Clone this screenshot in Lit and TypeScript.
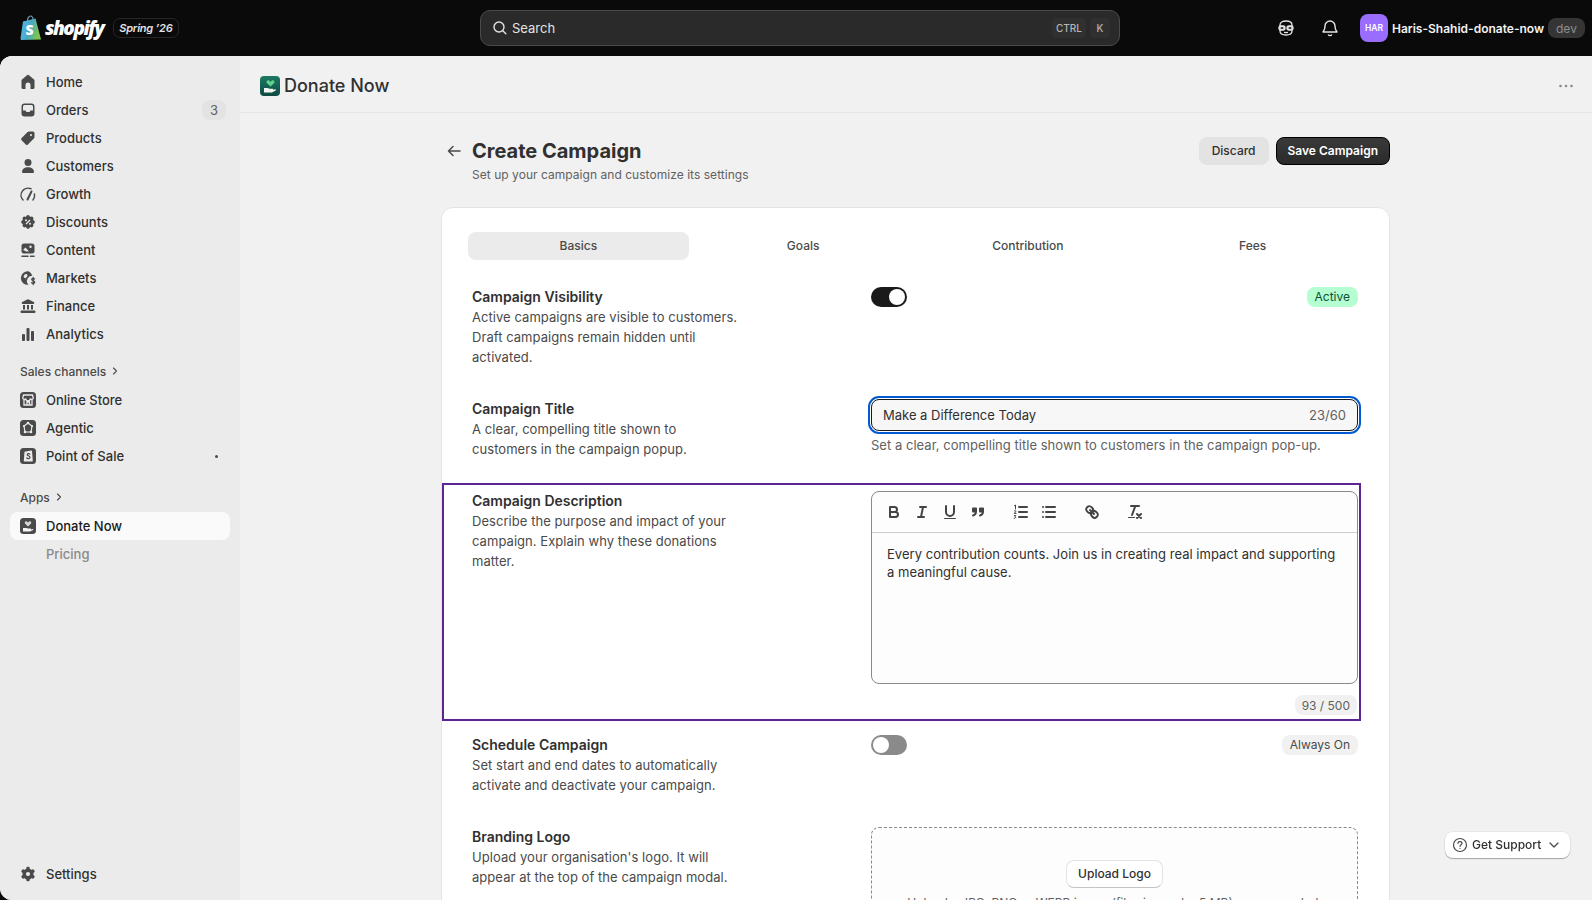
import { LitElement, html, svg, css } from 'lit'
import { customElement } from 'lit/decorators.js'

const icon = (body: unknown, size = 20, box = 20) => html`
    <svg width="${size}" height="${size}" viewBox="0 0 ${box} ${box}">${body}</svg>`

const navIcons: Record<string, unknown> = {
    home: svg`<path fill="#4a4a4a" d="M9 3.2a1.5 1.5 0 0 1 2 0l5 4.3a1.5 1.5 0 0 1 .5 1.1v6.900a1.500 1.500 0 0 1-1.500 1.500h-2.500v-4a2.500 2.500 0 0 0-5 0v4H5a1.500 1.500 0 0 1-1.500-1.500V8.600A1.500 1.500 0 0 1 4 7.500z"/>`,
    orders: svg`<path fill="#4a4a4a" fill-rule="evenodd" d="M6.500 3.500h7a3 3 0 0 1 3 3v7a3 3 0 0 1-3 3h-7a3 3 0 0 1-3-3v-7a3 3 0 0 1 3-3zM5 6.500V10.500h2.500l1 1.500h3l1-1.500H15V6.500A1.500 1.500 0 0 0 13.500 5h-7A1.500 1.500 0 0 0 5 6.500z"/>`,
    products: svg`<path fill="#4a4a4a" fill-rule="evenodd" d="M11 3.500h4A1.500 1.500 0 0 1 16.500 5v4a2 2 0 0 1-.6 1.400l-6 6a1.500 1.500 0 0 1-2.100 0l-4.200-4.200a1.500 1.500 0 0 1 0-2.100l6-6A2 2 0 0 1 11 3.500zM13 6a1 1 0 1 0 .01 0z"/>`,
    customers: svg`<circle cx="10" cy="6.500" r="3.500" fill="#4a4a4a"/><path fill="#4a4a4a" d="M4 16c0-3 2.500-4.800 6-4.800s6 1.800 6 4.800a1 1 0 0 1-1 1H5a1 1 0 0 1-1-1z"/>`,
    growth: svg`<g fill="none" stroke="#4a4a4a" stroke-width="1.500" stroke-linecap="round"><path d="M5 16a7 7 0 0 1 8-11.200"/><path d="M16.500 10a7 7 0 0 1-1.500 6"/><path stroke-width="2" d="M9.500 15.500 13.500 7.500"/></g>`,
    discounts: svg`<g fill="#4a4a4a"><circle cx="10" cy="10" r="5.800"/><circle cx="10" cy="4.900" r="1.800"/><circle cx="10" cy="15.100" r="1.800"/><circle cx="4.900" cy="10" r="1.800"/><circle cx="15.100" cy="10" r="1.800"/><circle cx="6.400" cy="6.400" r="1.800"/><circle cx="13.600" cy="6.400" r="1.800"/><circle cx="6.400" cy="13.600" r="1.800"/><circle cx="13.600" cy="13.600" r="1.800"/></g><g fill="#ebebeb"><circle cx="8" cy="8.200" r="1"/><circle cx="12" cy="11.800" r="1"/></g><path stroke="#ebebeb" stroke-width="1.200" d="M12 8 8 12"/>`,
    content: svg`<rect x="3.500" y="3.500" width="13" height="10" rx="2.500" fill="#4a4a4a"/><circle cx="12.500" cy="6.800" r="1.200" fill="#ebebeb"/><path fill="#ebebeb" d="m5 10 2.500-2.500L11 11.500H8.500z"/><path stroke="#4a4a4a" stroke-width="1.500" stroke-linecap="round" d="M4 16.300h6M12.500 16.300H16"/>`,
    markets: svg`<path fill="#4a4a4a" d="M10.500 3.300a6.800 6.800 0 1 0 0 13.500 5.200 5.200 0 0 1-.9-6.200 5.200 5.200 0 0 1 4.700-2.900 7 7 0 0 0-3.800-4.400z"/><path fill="#ebebeb" d="M6.500 6.500 9 6l.5 2-2 2.500L5.500 9z"/><path fill="none" stroke="#4a4a4a" stroke-width="1.300" stroke-linecap="round" d="M16.500 11c-.5-.8-2.800-.9-2.800.6s3 1 3 2.600-2.500 1.500-3.200.5M15.200 9.500v7"/>`,
    finance: svg`<path fill="#4a4a4a" d="M9.300 3.400a1.500 1.500 0 0 1 1.400 0l5.100 2.700c.9.500.6 1.900-.5 1.900H4.700c-1.100 0-1.400-1.400-.5-1.900zM3.500 14.500h13a1 1 0 0 1 1 1v.5a1 1 0 0 1-1 1h-13a1 1 0 0 1-1-1v-.5a1 1 0 0 1 1-1zM5 9h2v4.500H5zM9 9h2v4.500H9zM13 9h2v4.500h-2z"/>`,
    analytics: svg`<g fill="#4a4a4a"><rect x="4" y="10" width="3" height="7" rx="1"/><rect x="8.500" y="4" width="3" height="13" rx="1"/><rect x="13" y="7" width="3" height="10" rx="1"/></g>`,
    store: svg`<rect x="2" y="2" width="16" height="16" rx="3.500" fill="#4a4a4a"/><path fill="none" stroke="#ebebeb" stroke-width="1.300" d="M5.500 5h9l.8 3a1.600 1.600 0 0 1-3 .5 1.800 1.800 0 0 1-4.600 0 1.600 1.600 0 0 1-3-.5zM6 9.500V15h8V9.500M9 15v-3h2.500v3"/>`,
    agentic: svg`<rect x="2" y="2" width="16" height="16" rx="3.500" fill="#4a4a4a"/><path fill="none" stroke="#ebebeb" stroke-width="1.200" d="M10 5 14 8 13 14H7L6 8z"/><circle cx="10" cy="5" r="1.300" fill="#ebebeb"/><circle cx="6" cy="8" r="1.100" fill="#ebebeb"/><circle cx="14" cy="8" r="1.100" fill="#ebebeb"/><circle cx="7" cy="14" r="1.300" fill="#ebebeb"/><circle cx="13" cy="14" r="1.300" fill="#ebebeb"/>`,
    pos: svg`<rect x="2" y="2" width="16" height="16" rx="3.500" fill="#4a4a4a"/><path fill="#ebebeb" d="M6.500 5.800 13.200 4.500c.4 0 .7.200.8.600l.8 9.700c0 .4-.3.700-.7.700H6.500c-.4 0-.8-.3-.7-.7z"/><path fill="none" stroke="#4a4a4a" stroke-width="1.200" stroke-linecap="round" d="M11.800 8.200c-.6-.8-2.600-.7-2.600.5s2.800 1 2.800 2.600-2.400 1.600-3.200.7"/>`,
    donate: svg`<rect x="2" y="2" width="16" height="16" rx="3.500" fill="#4a4a4a"/><path fill="#d8d8d8" d="M10 10.500 7 7.600c-1-1.400.9-3 2.100-1.900l.9.800.9-.8c1.200-1.100 3.100.5 2.100 1.900z"/><path fill="#f5f5f5" d="M5 12h3.500l1.500.6h2.500c.8 0 .8 1 0 1.100l2-.7c.7-.2 1.100.6.5 1l-3 1.600H5z"/>`,
    settings: svg`<g fill="#4a4a4a"><circle cx="10" cy="10" r="5.500"/><rect x="8.300" y="2.800" width="3.400" height="14.400" rx="1.200"/><rect x="8.300" y="2.800" width="3.400" height="14.400" rx="1.200" transform="rotate(60 10 10)"/><rect x="8.300" y="2.800" width="3.400" height="14.400" rx="1.200" transform="rotate(120 10 10)"/></g><circle cx="10" cy="10" r="2.100" fill="#ebebeb"/>`,
}

const mainNav = [
    { name: 'Home', ic: 'home' },
    { name: 'Orders', ic: 'orders', badge: '3' },
    { name: 'Products', ic: 'products' },
    { name: 'Customers', ic: 'customers' },
    { name: 'Growth', ic: 'growth' },
    { name: 'Discounts', ic: 'discounts' },
    { name: 'Content', ic: 'content' },
    { name: 'Markets', ic: 'markets' },
    { name: 'Finance', ic: 'finance' },
    { name: 'Analytics', ic: 'analytics' },
]

const chevron = html`<svg class="chev" width="10" height="10" viewBox="0 0 10 10"><path d="M3.500 2 6.500 5l-3 3" fill="none" stroke="#4a4a4a" stroke-width="1.100" stroke-linecap="round" stroke-linejoin="round"/></svg>`

const toolGroups = [
    [
        svg`<path d="M5 4h4.500a2.500 2.500 0 0 1 0 5H5zM5 9h5.500a2.500 2.500 0 0 1 0 5H5z"/>`,
        svg`<path d="M7 4h6M5 14h6M8 14l2-10"/>`,
        svg`<path d="M5 3v6a4 4 0 0 0 4 4 4 4 0 0 0 4-4V3"/><rect x="3" y="15" width="12" height="1" rx=".5" fill="#444" stroke="none"/>`,
        svg`<rect x="4" y="5.500" width="3" height="3" fill="#444"/><rect x="11" y="5.500" width="3" height="3" fill="#444"/><path d="M7 8.500c0 2.100-1.100 3.500-3 4M14 8.500c0 2.100-1.100 3.500-3 4"/>`,
    ],
    [
        svg`<path d="M7 4h8M7 9h8M7 14h8"/><path stroke-width="1" d="M2.500 2.600 3.500 2v4M2.300 8c.8-.8 1.800-.3 1.500.5L2.300 10.500h1.800M2.400 12.500h1.400l-.8 1.200c1 0 1 2-1 1.500"/>`,
        svg`<path d="M6 4h9M6 9h9M6 14h9M3 4h.01M3 9h.01M3 14h.01"/>`,
    ],
    [
        svg`<path d="M7 7l4 4"/><path d="M8.900 4.577a3.476 3.476 0 0 1 .36 4.679A3.476 3.476 0 0 1 4.577 8.900C3.185 7.500 2.035 6.400 4.217 4.217S7.500 3.185 8.900 4.577z"/><path d="M13.423 9.100a3.476 3.476 0 0 0-4.679-.36 3.476 3.476 0 0 0 .36 4.679c1.392 1.392 2.500 2.542 4.679.36S14.815 10.500 13.423 9.100z"/>`,
    ],
    [
        svg`<path d="M5 3h8M6 12l3.350-9M11 11l4 4M15 11l-4 4"/><rect x="2" y="14" width="7" height="1" rx=".5" fill="#444" stroke="none"/>`,
    ],
]

@customElement('app-root')
export class AppRoot extends LitElement {
    static styles = css`
      :host {
        display: block;
        height: 900px;
        overflow: hidden;
        background: #0a0a0a;
        font-family: Inter, "Noto Sans", sans-serif;
        font-size: 13px;
        color: #303030;
      }
      .topbar {
        height: 56px;
        display: flex;
        align-items: center;
      }
      .brand {
        width: 480px;
        flex: none;
        display: flex;
        align-items: center;
        padding-left: 20px;
        box-sizing: border-box;
      }
      .wordmark {
        font-family: "Open Sans", sans-serif;
        font-style: italic;
        font-weight: 800;
        font-size: 19px;
        letter-spacing: -1.5px;
        color: #fff;
        margin-left: 3px;
      }
      .season {
        margin-left: 10px;
        height: 18px;
        padding: 0 5px;
        border: 1px solid #262626;
        border-radius: 7px;
        display: flex;
        align-items: center;
        font-size: 11px;
        font-style: italic;
        font-weight: 600;
        color: #e3e3e3;
        letter-spacing: -0.2px;
      }
      .search {
        width: 640px;
        height: 36px;
        flex: none;
        box-sizing: border-box;
        background: #2a2a2a;
        border: 1px solid #4a4a4a;
        border-radius: 10px;
        display: flex;
        align-items: center;
        padding: 0 9px 0 11px;
        gap: 4px;
        color: #e3e3e3;
        font-size: 13px;
      }
      .search span.label { flex: 1; }
      .kbd {
        height: 20px;
        padding: 0 4px;
        display: flex;
        align-items: center;
        justify-content: center;
        background: #303030;
        border-radius: 5px;
        font-size: 10px;
        font-weight: 500;
        color: #b5b5b5;
      }
      .kbd + .kbd { padding: 0; width: 20px; }
      .top-right {
        flex: 1;
        display: flex;
        align-items: center;
        padding-left: 156px;
      }
      .top-right .bell { margin-left: 24px; }
      .avatar {
        width: 28px;
        height: 28px;
        margin-left: 20px;
        border-radius: 8px;
        background: #9a6cff;
        color: #fff;
        font-size: 8.5px;
        font-weight: 600;
        display: flex;
        align-items: center;
        justify-content: center;
      }
      .shop {
        margin-left: 4px;
        color: #f1f1f1;
        font-size: 12px;
        font-weight: 600;
        white-space: nowrap;
      }
      .dev {
        margin-left: 4px;
        height: 20px;
        padding: 0 8px;
        border-radius: 8px;
        background: #353535;
        color: #8f8f8f;
        display: flex;
        align-items: center;
        font-size: 12px;
      }
      .body {
        height: 844px;
        display: flex;
        background: #f1f1f1;
        border-radius: 12px 0 0 12px;
        overflow: hidden;
      }
      .sidebar {
        width: 240px;
        flex: none;
        background: #ebebeb;
        padding: 12px 10px 12px;
        box-sizing: border-box;
        display: flex;
        flex-direction: column;
      }
      .nav-row {
        height: 28px;
        display: flex;
        align-items: center;
        gap: 8px;
        padding: 0 4px 0 8px;
        border-radius: 8px;
        font-weight: 550;
        color: #303030;
      }
      .nav-row.active { background: #fafafa; color: #1a1a1a; }
      .nav-row.sub { padding-left: 36px; color: #8a8a8a; }
      .nav-row svg { flex: none; }
      .nav-row .name { flex: 1; }
      .badge {
        width: 24px;
        height: 20px;
        border-radius: 8px;
        background: #e3e3e3;
        color: #616161;
        display: flex;
        align-items: center;
        justify-content: center;
        font-weight: 400;
      }
      .dot {
        width: 3px;
        height: 3px;
        border-radius: 50%;
        background: #4a4a4a;
        margin-right: 8px;
      }
      .section {
        height: 28px;
        box-sizing: border-box;
        margin-top: 10px;
        padding: 0 0 2px 10px;
        display: flex;
        align-items: center;
        gap: 4px;
        font-size: 12px;
        font-weight: 550;
        color: #4a4a4a;
      }
      .section.apps { margin-top: 14px; }
      .settings { margin-top: auto; }
      .main {
        flex: 1;
        min-width: 0;
        overflow: hidden;
      }
      .app-head {
        height: 57px;
        box-sizing: border-box;
        border-bottom: 1px solid #e6e6e6;
        display: flex;
        align-items: center;
        padding: 3px 18px 0 20px;
        gap: 4px;
        font-size: 18px;
        font-weight: 500;
        color: #303030;
      }
      .app-head .title { flex: 1; }
      .page {
        padding: 24px 202px 0 201px;
      }
      .page-head {
        display: flex;
        align-items: flex-start;
        height: 48px;
        margin-bottom: 22px;
        padding-left: 3px;
        gap: 8px;
      }
      .back { margin-top: 4px; }
      .heading { flex: 1; padding-top: 2px; }
      .heading h1 {
        margin: 0;
        font-size: 20px;
        line-height: 24px;
        font-weight: 650;
        color: #303030;
      }
      .heading p {
        margin: 2px 0 0;
        font-size: 12px;
        line-height: 20px;
        letter-spacing: 0.04px;
        color: #616161;
      }
      .btn {
        height: 28px;
        box-sizing: border-box;
        padding: 0 13px 1px;
        display: flex;
        align-items: center;
        border-radius: 8px;
        font-size: 12px;
        font-weight: 500;
      }
      .btn.plain { background: #e3e3e3; color: #303030; }
      .btn.primary {
        margin-left: -1px;
        padding: 0 11px 1px;
        background: linear-gradient(#3a3a3a, #2a2a2a);
        border: 1px solid #000;
        color: #fff;
        font-weight: 600;
      }
      .card {
        background: #fff;
        border: 1px solid #e3e3e3;
        border-radius: 12px;
        height: 900px;
      }
      .tabs {
        display: flex;
        gap: 4px;
        margin: 24px 26px 27px 26px;
      }
      .tab {
        flex: 1;
        height: 28px;
        box-sizing: border-box;
        padding-bottom: 1px;
        border-radius: 8px;
        display: flex;
        align-items: center;
        justify-content: center;
        font-size: 12px;
        font-weight: 500;
        color: #4a4a4a;
      }
      .tab.on { background: #ebebeb; }
      .row {
        display: grid;
        grid-template-columns: 399px 487px;
        margin: 0 28px 32px 0;
        padding: 0 2px 0 30px;
      }
      .row.marked {
        margin: -8px 28px 14px 0;
        padding: 6px 0 4px 28px;
        border: 2px solid #5e2590;
      }
      .info h3 {
        margin: 0;
        font-size: 14px;
        line-height: 20px;
        font-weight: 600;
        color: #303030;
      }
      .info p {
        margin: 0;
        width: 268px;
        line-height: 20px;
        letter-spacing: 0.05px;
        color: #4a4a4a;
      }
      .control-line {
        display: flex;
        justify-content: space-between;
        align-items: flex-start;
      }
      .toggle {
        width: 36px;
        height: 20px;
        box-sizing: border-box;
        padding: 2px;
        border-radius: 10px;
        display: flex;
        background: #8a8a8a;
      }
      .toggle.on { background: #1a1a1a; justify-content: flex-end; }
      .knob { width: 16px; height: 16px; border-radius: 50%; background: #fff; }
      .pill {
        height: 20px;
        box-sizing: border-box;
        padding: 0 8px 1px;
        border-radius: 8px;
        display: flex;
        align-items: center;
        font-size: 12px;
        background: #f1f1f1;
        color: #4a4a4a;
      }
      .pill.good { background: #b4fed2; color: #0c5132; }
      .pill.count { color: #616161; padding: 0 7px; }
      .field {
        height: 32px;
        box-sizing: border-box;
        display: flex;
        align-items: center;
        justify-content: space-between;
        padding: 0 11px;
        background: #f7f7f7;
        border: 1px solid #1a1a1a;
        border-radius: 8px;
        outline: 2px solid #005bd3;
        outline-offset: 1px;
      }
      .field .len { color: #616161; }
      .help { margin-top: 4px; line-height: 20px; letter-spacing: 0.03px; color: #616161; }
      .editor {
        height: 193px;
        box-sizing: border-box;
        border: 1px solid #8a8a8a;
        border-radius: 8px;
        background: #fdfdfd;
      }
      .toolbar {
        display: flex;
        height: 41px;
        box-sizing: border-box;
        padding: 8px;
        border-bottom: 1px solid #ccc;
      }
      .tool-group { display: flex; margin-right: 15px; }
      .tool { width: 28px; height: 24px; display: flex; align-items: center; justify-content: center; }
      .tool svg { fill: none; stroke: #444; stroke-width: 2; stroke-linecap: round; stroke-linejoin: round; }
      .content { padding: 12px 15px; line-height: 18px; letter-spacing: 0.03px; color: #303030; }
      .count-line { display: flex; justify-content: flex-end; margin-top: 11px; padding-right: 1px; }
      .drop {
        height: 200px;
        box-sizing: border-box;
        border: 1px dashed #8a8a8a;
        border-radius: 8px;
        background: #fdfdfd;
        padding-top: 32px;
        display: flex;
        flex-direction: column;
        align-items: center;
      }
      .upload {
        height: 28px;
        box-sizing: border-box;
        padding: 0 11px 1px;
        display: flex;
        align-items: center;
        background: #fff;
        border: 1px solid #e3e3e3;
        border-bottom-color: #c4c4c4;
        border-radius: 8px;
        font-size: 12px;
        font-weight: 500;
      }
      .drop p { margin: 5px 0 0; font-size: 12px; line-height: 20px; color: #616161; white-space: nowrap; }
      .support {
        position: fixed;
        left: 1445px;
        top: 832px;
        width: 125px;
        height: 26px;
        box-sizing: border-box;
        display: flex;
        align-items: center;
        gap: 3px;
        padding: 0 0 1px 6px;
        background: #fff;
        border-radius: 8px;
        box-shadow: 0 1px 1px rgba(0,0,0,.3), 0 0 0 1px rgba(0,0,0,.04);
        font-size: 12px;
        font-weight: 500;
        white-space: nowrap;
        color: #303030;
      }
      .support svg:last-child { margin-left: 2px; }
    `

    private _navRow(name: string, ic: string, extra: unknown = '', cls = '') {
        return html`
        <div class="nav-row ${cls}">
            ${icon(navIcons[ic])}
            <span class="name">${name}</span>
            ${extra}
        </div>`
    }

    private _topbar() {
        return html`
        <header class="topbar">
            <div class="brand">
                <svg width="22" height="26" viewBox="0 0 22 26">
                    <defs>
                        <linearGradient id="bag" x1="0" y1="0" x2="1" y2="0.3">
                            <stop offset="0" stop-color="#58b7e8"/>
                            <stop offset="0.55" stop-color="#4aa8c8"/>
                            <stop offset="1" stop-color="#7ec64a"/>
                        </linearGradient>
                    </defs>
                    <path fill="url(#bag)" d="M3 6.500 15.500 3.500 21 24.500 1 25 0.500 23.500z"/>
                    <path fill="none" stroke="#7a9fb5" stroke-width="1.200" d="M7.500 6c0-3 1.500-5 3-5s2.500 2 2.700 4"/>
                    <text x="5.500" y="20" font-family="Open Sans" font-weight="800" font-size="14" fill="#fff">S</text>
                </svg>
                <span class="wordmark">shopify</span>
                <span class="season">Spring ’26</span>
            </div>
            <div class="search">
                <svg width="16" height="16" viewBox="0 0 16 16"><circle cx="7" cy="7" r="5" fill="none" stroke="#e3e3e3" stroke-width="1.400"/><path d="m10.800 10.800 3 3" stroke="#e3e3e3" stroke-width="1.400" stroke-linecap="round"/></svg>
                <span class="label">Search</span>
                <span class="kbd">CTRL</span>
                <span class="kbd">K</span>
            </div>
            <div class="top-right">
                <svg width="20" height="20" viewBox="0 0 20 20" fill="none" stroke="#e3e3e3" stroke-width="1.300">
                    <path d="M4 9V7c0-2.500 2.500-4 6-4s6 1.500 6 4v2"/>
                    <path d="M4 12v1c0 2.500 2.500 4 6 4s6-1.500 6-4v-1"/>
                    <rect x="3" y="8" width="6" height="4" rx="1.500" fill="#e3e3e3"/>
                    <rect x="11" y="8" width="6" height="4" rx="1.500" fill="#e3e3e3"/>
                    <rect x="4.700" y="9.300" width="2.600" height="1.500" fill="#0a0a0a" stroke="none"/>
                    <rect x="12.700" y="9.300" width="2.600" height="1.500" fill="#0a0a0a" stroke="none"/>
                    <path d="M8 14.500h4"/>
                </svg>
                <svg class="bell" width="20" height="20" viewBox="0 0 20 20" fill="none" stroke="#e3e3e3" stroke-width="1.400" stroke-linejoin="round">
                    <path d="M10 3a5 5 0 0 0-5 5c0 3.500-1 4.500-2 6h14c-1-1.500-2-2.500-2-6a5 5 0 0 0-5-5z"/>
                    <path d="M8.200 16.500a2 2 0 0 0 3.600 0"/>
                </svg>
                <span class="avatar">HAR</span>
                <span class="shop">Haris-Shahid-donate-now</span>
                <span class="dev">dev</span>
            </div>
        </header>`
    }

    private _sidebar() {
        return html`
        <nav class="sidebar">
            ${mainNav.map(n => this._navRow(n.name, n.ic, n.badge ? html`<span class="badge">${n.badge}</span>` : ''))}
            <div class="section">Sales channels ${chevron}</div>
            ${this._navRow('Online Store', 'store')}
            ${this._navRow('Agentic', 'agentic')}
            ${this._navRow('Point of Sale', 'pos', html`<span class="dot"></span>`)}
            <div class="section apps">Apps ${chevron}</div>
            ${this._navRow('Donate Now', 'donate', '', 'active')}
            <div class="nav-row sub">Pricing</div>
            <div class="settings">${this._navRow('Settings', 'settings')}</div>
        </nav>`
    }

    private _editor() {
        return html`
        <div class="editor">
            <div class="toolbar">
                ${toolGroups.map(group => html`
                <div class="tool-group">
                    ${group.map(g => html`<span class="tool">${icon(g, 18, 18)}</span>`)}
                </div>`)}
            </div>
            <div class="content">Every contribution counts. Join us in creating real impact and supporting a meaningful cause.</div>
        </div>
        <div class="count-line"><span class="pill count">93 / 500</span></div>`
    }

    protected override render() {
        return html`
        ${this._topbar()}
        <div class="body">
            ${this._sidebar()}
            <main class="main">
                <div class="app-head">
                    <svg width="20" height="20" viewBox="0 0 20 20">
                        <defs><linearGradient id="app" x1="0" y1="0" x2="0" y2="1"><stop offset="0" stop-color="#1c7a62"/><stop offset="1" stop-color="#0e4a44"/></linearGradient></defs>
                        <rect width="20" height="20" rx="4" fill="url(#app)"/>
                        <path fill="#5fd38a" d="M10.500 10.500 6.800 7c-1.300-1.700 1.100-3.700 2.600-2.300l1.100 1 1.100-1c1.500-1.400 3.900.6 2.600 2.300z"/>
                        <path fill="#f3f7f2" d="M4 12h3.500l2 .8h3c1 0 1 1.200 0 1.300l2.500-.9c.9-.3 1.300.8.6 1.200l-3.600 2H4z"/>
                    </svg>
                    <span class="title">Donate Now</span>
                    <svg width="16" height="16" viewBox="0 0 16 16" fill="#8a8a8a"><circle cx="2.500" cy="8" r="1.300"/><circle cx="8" cy="8" r="1.300"/><circle cx="13.500" cy="8" r="1.300"/></svg>
                </div>
                <div class="page">
                    <div class="page-head">
                        <svg class="back" width="20" height="20" viewBox="0 0 20 20" fill="none" stroke="#4a4a4a" stroke-width="1.500" stroke-linecap="round" stroke-linejoin="round"><path d="M16 10H4.500M9 5.500 4.500 10 9 14.500"/></svg>
                        <div class="heading">
                            <h1>Create Campaign</h1>
                            <p>Set up your campaign and customize its settings</p>
                        </div>
                        <span class="btn plain">Discard</span>
                        <span class="btn primary">Save Campaign</span>
                    </div>
                    <section class="card">
                        <div class="tabs">
                            <span class="tab on">Basics</span>
                            <span class="tab">Goals</span>
                            <span class="tab">Contribution</span>
                            <span class="tab">Fees</span>
                        </div>
                        <div class="row">
                            <div class="info">
                                <h3>Campaign Visibility</h3>
                                <p>Active campaigns are visible to customers. Draft campaigns remain hidden until activated.</p>
                            </div>
                            <div class="control-line">
                                <span class="toggle on"><span class="knob"></span></span>
                                <span class="pill good">Active</span>
                            </div>
                        </div>
                        <div class="row">
                            <div class="info">
                                <h3>Campaign Title</h3>
                                <p>A clear, compelling title shown to customers in the campaign popup.</p>
                            </div>
                            <div>
                                <div class="field"><span>Make a Difference Today</span><span class="len">23/60</span></div>
                                <div class="help">Set a clear, compelling title shown to customers in the campaign pop-up.</div>
                            </div>
                        </div>
                        <div class="row marked">
                            <div class="info">
                                <h3>Campaign Description</h3>
                                <p>Describe the purpose and impact of your campaign. Explain why these donations matter.</p>
                            </div>
                            <div>${this._editor()}</div>
                        </div>
                        <div class="row">
                            <div class="info">
                                <h3>Schedule Campaign</h3>
                                <p>Set start and end dates to automatically activate and deactivate your campaign.</p>
                            </div>
                            <div class="control-line">
                                <span class="toggle"><span class="knob"></span></span>
                                <span class="pill">Always On</span>
                            </div>
                        </div>
                        <div class="row">
                            <div class="info">
                                <h3>Branding Logo</h3>
                                <p>Upload your organisation's logo. It will appear at the top of the campaign modal.</p>
                            </div>
                            <div class="drop">
                                <span class="upload">Upload Logo</span>
                                <p>Upload a JPG, PNG or WEBP image (file size under 5 MB) recommended.</p>
                            </div>
                        </div>
                    </section>
                </div>
            </main>
        </div>
        <div class="support">
            <svg width="18" height="18" viewBox="0 0 18 18" fill="none" stroke="#4a4a4a" stroke-width="1.200" stroke-linecap="round"><circle cx="9" cy="9" r="6.500"/><path d="M7 7.300c0-2.300 4-2.300 4 0 0 1.500-2 1.500-2 3"/><path d="M9 12.500h.01"/></svg>
            <span>Get Support</span>
            <svg width="16" height="16" viewBox="0 0 16 16" fill="none" stroke="#4a4a4a" stroke-width="1.300" stroke-linecap="round" stroke-linejoin="round"><path d="M4 6l4 4 4-4"/></svg>
        </div>
        `
    }
}

declare global {
    interface HTMLElementTagNameMap {
      'app-root': AppRoot
    }
}
